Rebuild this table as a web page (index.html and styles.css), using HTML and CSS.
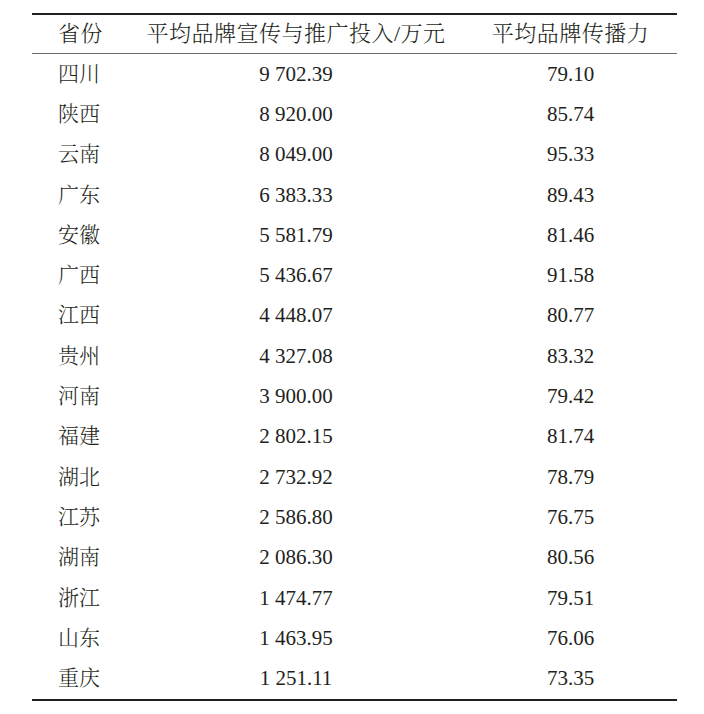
FILE: index.html
```html
<!DOCTYPE html>
<html lang="zh">
<head>
<meta charset="utf-8">
<link rel="stylesheet" href="styles.css">
</head>
<body>
<div class="page">
<table class="data">
<colgroup><col class="c1"><col class="c2"><col class="c3"></colgroup>
<thead>
<tr><th class="prov">省份</th><th>平均品牌宣传与推广投入/万元</th><th>平均品牌传播力</th></tr>
</thead>
<tbody>
<tr><td class="prov">四川</td><td>9 702.39</td><td>79.10</td></tr>
<tr><td class="prov">陕西</td><td>8 920.00</td><td>85.74</td></tr>
<tr><td class="prov">云南</td><td>8 049.00</td><td>95.33</td></tr>
<tr><td class="prov">广东</td><td>6 383.33</td><td>89.43</td></tr>
<tr><td class="prov">安徽</td><td>5 581.79</td><td>81.46</td></tr>
<tr><td class="prov">广西</td><td>5 436.67</td><td>91.58</td></tr>
<tr><td class="prov">江西</td><td>4 448.07</td><td>80.77</td></tr>
<tr><td class="prov">贵州</td><td>4 327.08</td><td>83.32</td></tr>
<tr><td class="prov">河南</td><td>3 900.00</td><td>79.42</td></tr>
<tr><td class="prov">福建</td><td>2 802.15</td><td>81.74</td></tr>
<tr><td class="prov">湖北</td><td>2 732.92</td><td>78.79</td></tr>
<tr><td class="prov">江苏</td><td>2 586.80</td><td>76.75</td></tr>
<tr><td class="prov">湖南</td><td>2 086.30</td><td>80.56</td></tr>
<tr><td class="prov">浙江</td><td>1 474.77</td><td>79.51</td></tr>
<tr><td class="prov">山东</td><td>1 463.95</td><td>76.06</td></tr>
<tr><td class="prov">重庆</td><td>1 251.11</td><td>73.35</td></tr>
</tbody>
</table>
</div>
</body>
</html>
```
FILE: styles.css
```css
html, body {
  margin: 0;
  padding: 0;
  background: #ffffff;
}
.page {
  padding: 13px 27px 0 32px;
}
.data {
  width: 645px;
  border-collapse: collapse;
  table-layout: fixed;
  font-family: "Liberation Serif", "Noto Serif CJK SC", "Noto Sans CJK SC", serif;
  font-size: 21px;
  font-weight: 300;
  color: #231f20;
  border-top: 2px solid #231f20;
  border-bottom: 2px solid #231f20;
}
.c1 { width: 96px; }
.c2 { width: 336px; }
.c3 { width: 213px; }
.data th {
  font-weight: 300;
  font-size: 22px;
  letter-spacing: 0.5px;
  height: 38px;
  padding: 0;
  text-align: center;
  vertical-align: middle;
  border-bottom: 1px solid #6d6d6d;
  line-height: 1;
}
.data td {
  height: 40.3px;
  padding: 0;
  text-align: center;
  vertical-align: middle;
  line-height: 1;
}
.data .prov {
  text-align: left;
  padding-left: 26px;
}
```
